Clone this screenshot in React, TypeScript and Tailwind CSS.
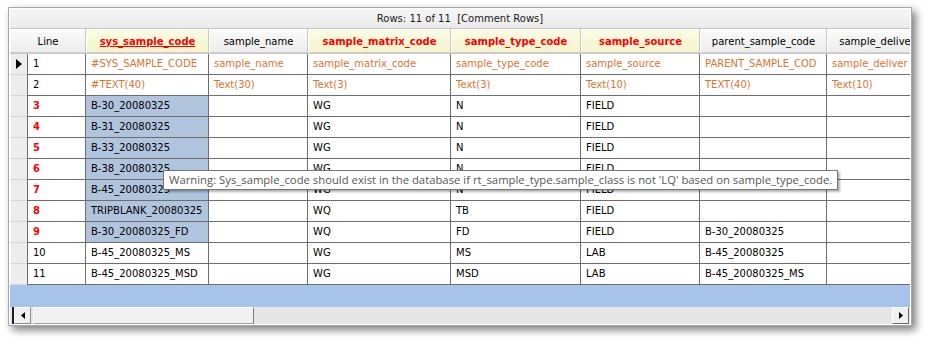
import React from 'react';

type Col = { label: string; w: string; req?: boolean; under?: boolean };

const cols: Col[] = [
  { label: 'sys_sample_code', w: 'w-[123px]', req: true, under: true },
  { label: 'sample_name', w: 'w-[99px]' },
  { label: 'sample_matrix_code', w: 'w-[143px]', req: true },
  { label: 'sample_type_code', w: 'w-[130px]', req: true },
  { label: 'sample_source', w: 'w-[119px]', req: true },
  { label: 'parent_sample_code', w: 'w-[127px]' },
  { label: 'sample_delivery_group', w: 'w-[140px]' },
];

type Row = { n: string; v: string[]; orange?: boolean; red?: boolean; sel?: boolean; arrow?: boolean };

const rows: Row[] = [
  { n: '1', orange: true, arrow: true, v: ['#SYS_SAMPLE_CODE', 'sample_name', 'sample_matrix_code', 'sample_type_code', 'sample_source', 'PARENT_SAMPLE_COD', 'sample_deliver'] },
  { n: '2', orange: true, v: ['#TEXT(40)', 'Text(30)', 'Text(3)', 'Text(3)', 'Text(10)', 'TEXT(40)', 'Text(10)'] },
  { n: '3', red: true, sel: true, v: ['B-30_20080325', '', 'WG', 'N', 'FIELD', '', ''] },
  { n: '4', red: true, sel: true, v: ['B-31_20080325', '', 'WG', 'N', 'FIELD', '', ''] },
  { n: '5', red: true, sel: true, v: ['B-33_20080325', '', 'WG', 'N', 'FIELD', '', ''] },
  { n: '6', red: true, sel: true, v: ['B-38_20080325', '', 'WG', 'N', 'FIELD', '', ''] },
  { n: '7', red: true, sel: true, v: ['B-45_20080325', '', 'WG', 'N', 'FIELD', '', ''] },
  { n: '8', red: true, sel: true, v: ['TRIPBLANK_20080325', '', 'WQ', 'TB', 'FIELD', '', ''] },
  { n: '9', red: true, sel: true, v: ['B-30_20080325_FD', '', 'WQ', 'FD', 'FIELD', 'B-30_20080325', ''] },
  { n: '10', v: ['B-45_20080325_MS', '', 'WG', 'MS', 'LAB', 'B-45_20080325', ''] },
  { n: '11', v: ['B-45_20080325_MSD', '', 'WG', 'MSD', 'LAB', 'B-45_20080325_MS', ''] },
];

function HeaderCell({ c }: { c: Col }) {
  return (
    <div className={`${c.w} shrink-0 h-full border-r border-[#c8c8c8] flex`}>
      <div
        className={`flex-1 border-l border-t border-white border-b border-b-[#d0d0d0] flex items-center justify-center whitespace-nowrap overflow-hidden ${
          c.req
            ? 'bg-gradient-to-b from-[#fcfce6] to-[#f3f3cb] text-[#ff0000] font-bold'
            : 'bg-gradient-to-b from-[#fbfbfb] to-[#ececec] text-black'
        } ${c.under ? 'underline' : ''}`}
      >
        {c.label}
      </div>
    </div>
  );
}

export default function App() {
  return (
    <div className="relative w-[928px] h-[344px] bg-white overflow-hidden pt-[7px] pl-[8px] font-['DejaVu_Sans',sans-serif] text-[10px]">
      <div className="w-[904px] h-[319px] border border-[#a8a8a8] bg-white p-px shadow-[4px_4px_8px_rgba(0,0,0,0.5)]">
        <div className="w-[900px] h-[315px] flex flex-col overflow-hidden">
          {/* title bar */}
          <div className="h-[20px] shrink-0 border-b border-[#c4c4c4] bg-gradient-to-b from-[#f5f5f5] to-[#ebebeb] flex items-center justify-center whitespace-pre text-[#1a1a1a]">
            Rows: 11 of 11  [Comment Rows]
          </div>
          {/* header */}
          <div className="h-[25px] shrink-0 flex bg-[#ececec] border-b border-[#c6c6c6]">
            <div className="w-[76px] shrink-0 h-full border-r border-[#c8c8c8] flex">
              <div className="flex-1 border-l border-t border-white border-b border-b-[#d0d0d0] bg-gradient-to-b from-[#fbfbfb] to-[#ececec] flex items-center justify-center">
                Line
              </div>
            </div>
            {cols.map((c) => (
              <HeaderCell key={c.label} c={c} />
            ))}
          </div>
          {/* rows */}
          <div className="flex flex-col shrink-0">
            {rows.map((r) => (
              <div key={r.n} className="flex h-[21px] shrink-0">
                <div className="w-[18px] shrink-0 h-full border-r border-[#6e6e6e] bg-[#ededed] flex">
                  <div className="flex-1 border-l border-white border-b border-b-[#d6d6d6] flex items-center pl-[5px]">
                    {r.arrow && (
                      <svg width="6" height="10" viewBox="0 0 6 10">
                        <polygon points="0,0 6,5 0,10" fill="#000" />
                      </svg>
                    )}
                  </div>
                </div>
                <div
                  className={`w-[58px] shrink-0 h-full border-r border-b border-[#6e6e6e] bg-white pl-[5px] pb-px flex items-center ${
                    r.red ? 'text-[#ff0000] font-bold' : 'text-black'
                  }`}
                >
                  {r.n}
                </div>
                {cols.map((c, i) => (
                  <div
                    key={c.label}
                    className={`${c.w} shrink-0 h-full border-r border-b border-[#6e6e6e] pl-[5px] pb-px flex items-center whitespace-nowrap overflow-hidden ${
                      i === 0 && r.sel ? 'bg-[#b0c4de]' : 'bg-white'
                    } ${r.orange ? 'text-[#e0732f]' : 'text-black'}`}
                  >
                    {r.v[i]}
                  </div>
                ))}
              </div>
            ))}
          </div>
          {/* empty blue area */}
          <div className="flex-1 bg-[#a6c4e9]" />
          {/* horizontal scrollbar */}
          <div className="h-[17px] shrink-0 flex bg-[#e6e6e6]">
            <div className="w-[2px] shrink-0" />
            <div className="w-[2px] shrink-0 bg-[#1c1c3a]" />
            <div className="w-[17px] shrink-0 border-t border-l border-white border-r border-b border-r-[#8a8a8a] border-b-[#8a8a8a] bg-[#f0f0f0] flex items-center justify-center">
              <svg width="4" height="7" viewBox="0 0 4 7">
                <polygon points="4,0 0,3.5 4,7" fill="#000" />
              </svg>
            </div>
            <div className="w-[2px] shrink-0" />
            <div className="w-[221px] shrink-0 border-t border-l border-white border-r border-b border-r-[#7a7a7a] border-b-[#a0a0a0] bg-[#f1f1f1]" />
            <div className="flex-1" />
            <div className="w-[17px] shrink-0 border-t border-l border-white border-r border-b border-r-[#6a6a6a] border-b-[#6a6a6a] bg-[#f0f0f0] flex items-center justify-center">
              <svg width="4" height="7" viewBox="0 0 4 7">
                <polygon points="0,0 4,3.5 0,7" fill="#000" />
              </svg>
            </div>
            <div className="w-px shrink-0" />
          </div>
        </div>
      </div>
      {/* tooltip */}
      <div className="absolute left-[163px] top-[170px] w-[675px] h-[20px] bg-white border border-[#767676] shadow-[2px_2px_2px_rgba(0,0,0,0.3)] pl-[5px] flex items-center whitespace-nowrap font-['Open_Sans',sans-serif] text-[11.3px] text-[#575757]">
        Warning: Sys_sample_code should exist in the database if rt_sample_type.sample_class is not &apos;LQ&apos; based on sample_type_code.
      </div>
    </div>
  );
}
